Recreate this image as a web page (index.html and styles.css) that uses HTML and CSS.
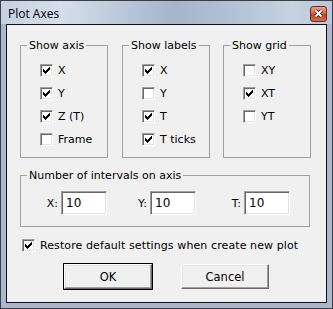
FILE: index.html
```html
<!DOCTYPE html>
<html lang="en">
<head>
  <meta charset="UTF-8" />
  <title>Plot Axes</title>
  <link rel="stylesheet" href="styles.css">
</head>
<body>

  <div class="window">
    <div class="titlebar">
      <span class="title">Plot Axes</span>
      <span class="close">
        <svg width="17" height="16" viewBox="0 0 17 16">
          <path d="M5.5 4.5 L11.5 10.5 M11.5 4.5 L5.5 10.5" stroke="#3a1a10" stroke-width="3.6" />
          <path d="M5.5 4.5 L11.5 10.5 M11.5 4.5 L5.5 10.5" stroke="#fff" stroke-width="2" />
        </svg>
      </span>
    </div>

    <div class="client">
      <div class="groups">
        <fieldset class="group">
          <legend>Show axis</legend>
          <div class="checks">
            <label class="check"><span class="box on"></span>X</label>
            <label class="check"><span class="box on"></span>Y</label>
            <label class="check"><span class="box on"></span>Z (T)</label>
            <label class="check"><span class="box"></span>Frame</label>
          </div>
        </fieldset>

        <fieldset class="group">
          <legend>Show labels</legend>
          <div class="checks">
            <label class="check"><span class="box on"></span>X</label>
            <label class="check"><span class="box"></span>Y</label>
            <label class="check"><span class="box on"></span>T</label>
            <label class="check"><span class="box on"></span>T ticks</label>
          </div>
        </fieldset>

        <fieldset class="group">
          <legend>Show grid</legend>
          <div class="checks">
            <label class="check"><span class="box"></span>XY</label>
            <label class="check"><span class="box on"></span>XT</label>
            <label class="check"><span class="box"></span>YT</label>
          </div>
        </fieldset>
      </div>

      <fieldset class="intervals">
        <legend>Number of intervals on axis</legend>
        <div class="fields">
          <div class="field"><span>X:</span><input type="text" value="10" /></div>
          <div class="field"><span>Y:</span><input type="text" value="10" /></div>
          <div class="field"><span>T:</span><input type="text" value="10" /></div>
        </div>
      </fieldset>

      <label class="check restore"><span class="box on"></span>Restore default settings when create new plot</label>

      <div class="buttons">
        <button type="button" class="default">OK</button>
        <button type="button">Cancel</button>
      </div>
    </div>
  </div>

</body>
</html>
```

FILE: styles.css
```css
body {
  margin: 0;
  padding: 0;
  font-family: 'DejaVu Sans', Tahoma, sans-serif;
  font-size: 11px;
  color: #000;
  background: #fff;
}
.window {
  width: 333px;
  height: 309px;
  box-sizing: border-box;
  border: 1px solid #3b3f45;
  background: #a9b8cd;
  padding: 0 5px 5px 5px;
  display: flex;
  flex-direction: column;
}
.titlebar {
  height: 23px;
  display: flex;
  align-items: center;
  justify-content: space-between;
  background: linear-gradient(90deg, #c4d1e0 0%, #d5dfeb 18%, #b8c6d8 38%, #a6b5ca 52%, #b3c1d4 70%, #c6d2e1 88%, #b9c7d9 100%);
  margin: 0 -5px;
  padding: 0 5px 0 7px;
}
.title {
  font-family: 'Open Sans', 'Liberation Sans', sans-serif;
  font-size: 12px;
  color: #000;
  padding-top: 1px;
}
.close {
  width: 17px;
  height: 16px;
  box-sizing: border-box;
  border: 1px solid #6b2a1c;
  border-radius: 3px;
  background: linear-gradient(#eba08a, #d8694c 45%, #c43f22 55%, #d76e4c);
  display: flex;
  margin-top: 2px;
}
.close svg {
  display: block;
  margin: -1px;
}
.client {
  flex: 1;
  border: 1px solid #111;
  background: #f0f0f0;
  padding: 14px 0 0 13px;
}
.groups {
  display: flex;
  gap: 14px;
}
fieldset {
  margin: 0;
  padding: 0;
  min-width: 0;
  box-sizing: border-box;
  border: 1px solid #a0a0a0;
}
legend {
  margin-left: 6px;
  padding: 0 2px;
  line-height: 13px;
  white-space: nowrap;
}
.group {
  width: 88px;
  height: 119px;
}
.groups .group:nth-child(3) {
  margin-left: -1px;
}
.checks {
  display: flex;
  flex-direction: column;
  padding: 7px 0 0 19px;
}
.check {
  display: flex;
  align-items: center;
  height: 23px;
  gap: 5px;
}
.box {
  width: 13px;
  height: 13px;
  box-sizing: border-box;
  border-top: 1px solid #a0a0a0;
  border-left: 1px solid #a0a0a0;
  border-bottom: 1px solid #fff;
  border-right: 1px solid #fff;
  box-shadow: inset 1px 1px 0 #696969, inset -1px -1px 0 #e3e3e3;
  background: #fff;
  flex: none;
}
.box.on {
  background: #fff url("data:image/svg+xml,%3Csvg xmlns='http://www.w3.org/2000/svg' width='11' height='11'%3E%3Cpath d='M2 4h1v1h1v1h1V5h1V4h1V3h1V2h1v3H8v1H7v1H6v1H5v1H4V8H3V7H2z' fill='%23000'/%3E%3C/svg%3E") no-repeat 0 0;
}
.intervals {
  width: 290px;
  height: 58px;
  margin-top: 11px;
}
.fields {
  display: grid;
  grid-template-columns: 86px 89px 94px;
  padding-top: 9px;
}
.field {
  display: flex;
  justify-content: flex-end;
  align-items: center;
  gap: 3px;
}
.field input {
  width: 46px;
  height: 24px;
  box-sizing: border-box;
  margin: 0;
  padding: 0 0 0 4px;
  font: inherit;
  font-size: 12px;
  border-top: 1px solid #a0a0a0;
  border-left: 1px solid #a0a0a0;
  border-bottom: 1px solid #fff;
  border-right: 1px solid #fff;
  box-shadow: inset 1px 1px 0 #696969, inset -1px -1px 0 #e3e3e3;
  background: #fff;
  outline: none;
}
.restore {
  margin: 7px 0 0 2px;
  letter-spacing: 0.1px;
}
.buttons {
  display: flex;
  justify-content: center;
  gap: 29px;
  margin: 7px 13px 0 0;
}
button {
  width: 88px;
  height: 25px;
  font: inherit;
  font-size: 11.5px;
  background: #f0f0f0;
  border-top: 1px solid #fff;
  border-left: 1px solid #fff;
  border-right: 1px solid #696969;
  border-bottom: 1px solid #696969;
  box-shadow: inset -1px -1px 0 #a0a0a0, inset 1px 1px 0 #e3e3e3;
  padding: 0;
  color: #000;
}
button.default {
  outline: 1px solid #000;
  outline-offset: 0;
}
```
